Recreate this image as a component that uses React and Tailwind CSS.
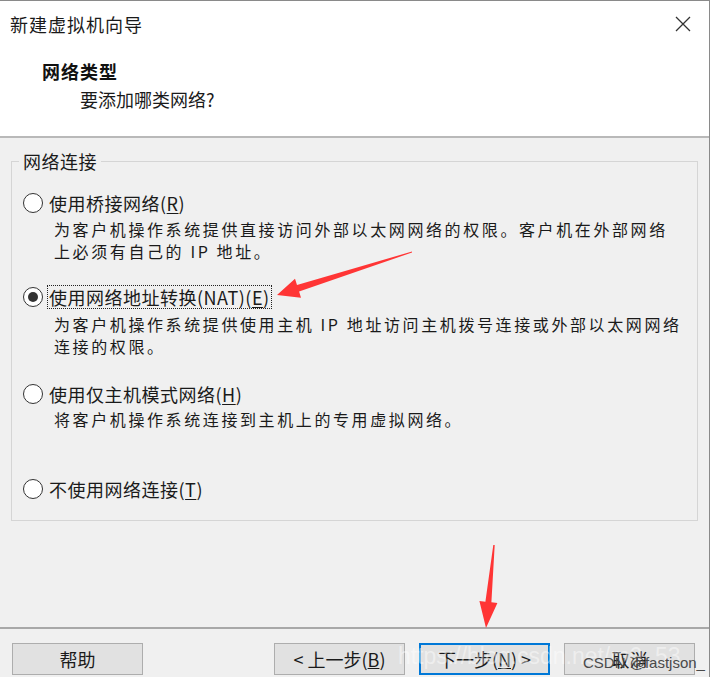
import React from 'react';

const cjk = "font-['Noto_Sans_CJK_SC','Noto_Sans',sans-serif]";

function Radio({checked}) {
    return (
        <span className="w-[20px] h-[20px] shrink-0 rounded-full border border-[#333] bg-white flex items-center justify-center">
            {checked && <span className="w-[10px] h-[10px] rounded-full bg-[#333]"/>}
        </span>
    );
}

function Option({label, mnemonic, suffix = '', checked, focused, children, className = ''}) {
    return (
        <div className={className}>
            <div className="flex items-center h-[24px]">
                <Radio checked={checked}/>
                <span
                    className={`ml-[5px] text-[18px] leading-[22px] tracking-[0.5px] text-[#1a1a1a] ${focused ? 'outline outline-1 outline-dotted outline-[#222] px-[1px]' : 'pl-[1px]'}`}>
                    {label}(<u className="underline-offset-2">{mnemonic}</u>){suffix}
                </span>
            </div>
            {children && (
                <div className="pl-[31px] text-[16px] leading-[22px] tracking-[2.6px] text-[#1a1a1a]">
                    {children}
                </div>
            )}
        </div>
    );
}

function Button({children, primary}) {
    return (
        <button
            className={`w-[131px] h-[32px] bg-[#e1e1e1] text-[18px] leading-none text-[#1a1a1a] ${primary ? 'border-2 border-[#0078d7]' : 'border border-[#adadad]'}`}>
            {children}
        </button>
    );
}

export default function App() {
    return (
        <div className={`w-[715px] h-[681px] bg-white relative overflow-hidden ${cjk}`}>
            <div className="w-[710px] h-[677px] flex flex-col border-t border-r border-[#8a8a8a] bg-[#f0f0f0]">
                {/* header */}
                <div className="h-[137px] bg-white border-b-2 border-[#b9b9b9] shrink-0">
                    <div className="flex items-center justify-between h-[46px] pl-[10px] pr-[18px]">
                        <span className="text-[18px] tracking-[1px] text-[#1a1a1a]">新建虚拟机向导</span>
                        <svg width="16" height="16" viewBox="0 0 16 16" className="text-[#333]">
                            <path d="M1 1L15 15M15 1L1 15" stroke="currentColor" strokeWidth="1.3"/>
                        </svg>
                    </div>
                    <div className="pl-[42px] pt-[12px] text-[18px] leading-[24px] font-bold tracking-[1px] text-[#111]">网络类型</div>
                    <div className="pl-[80px] pt-[4px] text-[18px] leading-[24px] text-[#1a1a1a]">要添加哪类网络?</div>
                </div>

                {/* body */}
                <div className="flex-1 pt-[13px] px-[11px]">
                    <fieldset className="border border-[#d5d5d5] w-[687px] h-[370px] pt-[20px]">
                        <legend className="ml-[7px] px-[4px] text-[18px] leading-[20px] tracking-[0.5px] text-[#1a1a1a]">网络连接</legend>
                        <div className="pl-[11px]">
                            <Option label="使用桥接网络" mnemonic="R">
                                <div className="mt-[3px]">为客户机操作系统提供直接访问外部以太网网络的权限。客户机在外部网络</div>
                                <div>上必须有自己的 IP 地址。</div>
                            </Option>
                            <Option className="mt-[23px]" label="使用网络地址转换(NAT)" mnemonic="E" checked focused>
                                <div className="mt-[4px]">为客户机操作系统提供使用主机 IP 地址访问主机拨号连接或外部以太网网络</div>
                                <div>连接的权限。</div>
                            </Option>
                            <Option className="mt-[25px]" label="使用仅主机模式网络" mnemonic="H">
                                <div className="mt-[2px]">将客户机操作系统连接到主机上的专用虚拟网络。</div>
                            </Option>
                            <Option className="mt-[47px]" label="不使用网络连接" mnemonic="T"/>
                        </div>
                    </fieldset>
                </div>

                {/* footer */}
                <div className="h-[50px] shrink-0 border-t-2 border-[#a8a8a8] flex items-start pt-[14px] pl-[12px] pr-[14px]">
                    <Button>帮助</Button>
                    <div className="flex-1"/>
                    <div className="flex gap-[14px]">
                        <Button>&lt; 上一步(<u>B</u>)</Button>
                        <Button primary>下一步(<u>N</u>) &gt;</Button>
                        <Button>取消</Button>
                    </div>
                </div>
            </div>

            {/* watermark */}
            <div className="absolute left-[398px] top-[645px] text-[23px] leading-none text-white/45 font-['Liberation_Sans',sans-serif] whitespace-nowrap pointer-events-none">
                https://blog.csdn.net/m0_53
            </div>
            <div className="absolute left-[583px] top-[655px] text-[15px] leading-none text-[#4a4a4a] font-['Liberation_Sans',sans-serif] whitespace-nowrap pointer-events-none">
                CSDN @fastjson_
            </div>

            {/* annotation arrows */}
            <svg className="absolute inset-0 pointer-events-none" width="715" height="681" viewBox="0 0 715 681">
                <polygon fill="#ff3535"
                         points="412,251.5 297,285 295,278.8 277,295 301,297.8 299.1,291.6 412,252.5"/>
                <polygon fill="#ff3535"
                         points="493.3,545 485.4,601.7 479.4,601.1 486,628 497.4,602.9 491.4,602.3 494.7,545"/>
            </svg>
        </div>
    );
}
